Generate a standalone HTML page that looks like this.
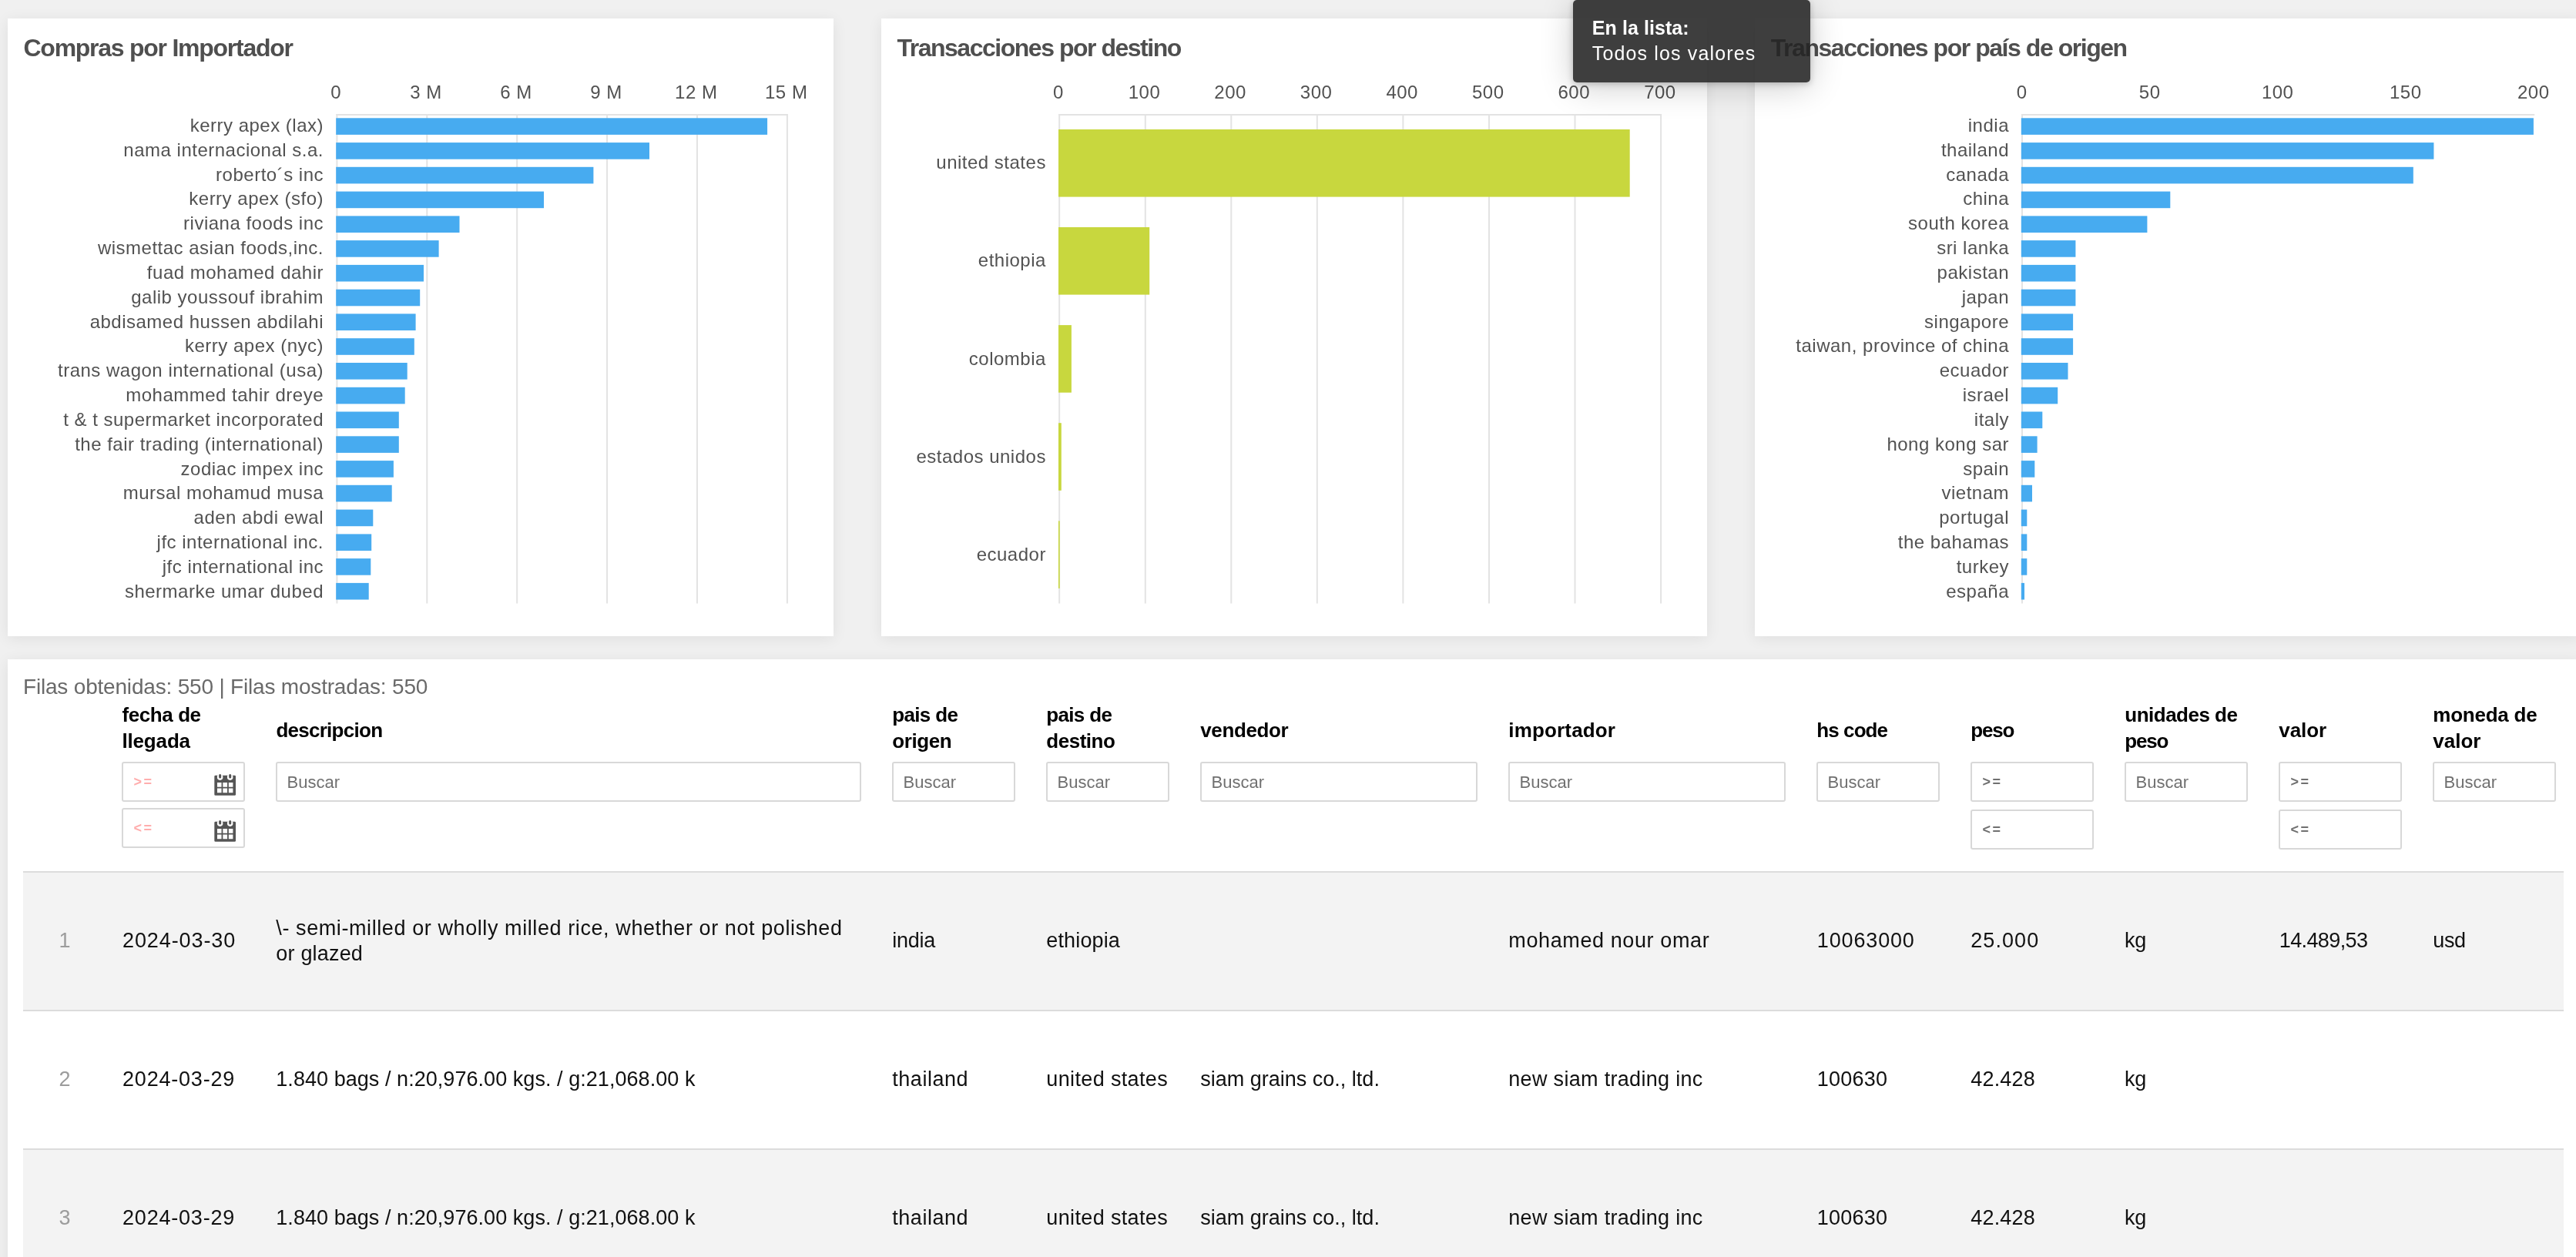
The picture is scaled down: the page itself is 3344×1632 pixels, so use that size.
<!DOCTYPE html><html lang="es"><head><meta charset="utf-8"><title>Dashboard</title><style>
html,body{margin:0;padding:0}
body{width:3344px;height:1632px;overflow:hidden;background:#f0f0f0;position:relative;font-family:'Liberation Sans', sans-serif}
#app{position:absolute;left:0;top:0;width:3344px;height:1632px;overflow:hidden;will-change:transform}
.card{position:absolute;background:#fff;box-shadow:0 3px 18px rgba(0,0,0,.075)}
.t{position:absolute;white-space:pre;display:block;margin:0;font-weight:400}
.chart{position:absolute;left:0;top:0}
.tip{position:absolute;left:2042px;top:0;width:308px;height:107px;border-radius:5px;background:rgba(35,35,35,.88);box-shadow:0 2px 8px rgba(0,0,0,.22),0 6px 44px rgba(0,0,0,.2)}
.inp{position:absolute;box-sizing:border-box;border:2px solid #d8d8d8;border-radius:3px;background:#fff}
.ic{position:absolute}
.row{position:absolute;left:20px;width:3298px;box-sizing:border-box}
.hline{position:absolute;left:20px;width:3298px;height:2px;background:#dcdcdc}
</style></head><body><main id="app">
<section class="card" style="left:10px;top:24px;width:1072px;height:802px">
<svg class="chart" width="1072" height="802" viewBox="10 24 1072 802">
<g stroke="#e3e3e3" stroke-width="2" fill="none">
<line x1="436.4" y1="149.0" x2="1022.9" y2="149.0"/>
<line x1="437.4" y1="148.0" x2="437.4" y2="783.6"/>
<line x1="554.3" y1="148.0" x2="554.3" y2="783.6"/>
<line x1="671.2" y1="148.0" x2="671.2" y2="783.6"/>
<line x1="788.1" y1="148.0" x2="788.1" y2="783.6"/>
<line x1="905.0" y1="148.0" x2="905.0" y2="783.6"/>
<line x1="1021.9" y1="148.0" x2="1021.9" y2="783.6"/>
</g>
<g fill="#47abf0">
<rect x="436.2" y="153.3" width="559.9" height="21.6"/>
<rect x="436.2" y="185.1" width="406.8" height="21.6"/>
<rect x="436.2" y="216.8" width="334.2" height="21.6"/>
<rect x="436.2" y="248.6" width="269.8" height="21.6"/>
<rect x="436.2" y="280.4" width="160.3" height="21.6"/>
<rect x="436.2" y="312.1" width="133.4" height="21.6"/>
<rect x="436.2" y="343.9" width="113.8" height="21.6"/>
<rect x="436.2" y="375.7" width="109.0" height="21.6"/>
<rect x="436.2" y="407.4" width="103.4" height="21.6"/>
<rect x="436.2" y="439.2" width="101.6" height="21.6"/>
<rect x="436.2" y="471.0" width="92.5" height="21.6"/>
<rect x="436.2" y="502.8" width="89.5" height="21.6"/>
<rect x="436.2" y="534.5" width="81.6" height="21.6"/>
<rect x="436.2" y="566.3" width="81.6" height="21.6"/>
<rect x="436.2" y="598.1" width="74.7" height="21.6"/>
<rect x="436.2" y="629.8" width="72.5" height="21.6"/>
<rect x="436.2" y="661.6" width="48.1" height="21.6"/>
<rect x="436.2" y="693.4" width="46.0" height="21.6"/>
<rect x="436.2" y="725.1" width="45.1" height="21.6"/>
<rect x="436.2" y="756.9" width="42.5" height="21.6"/>
</g>
<g font-family="'Liberation Sans', sans-serif" font-size="24" letter-spacing="0.5" fill="#525252" text-anchor="middle">
<text x="436.2" y="127.7">0</text>
<text x="553.1" y="127.7">3 M</text>
<text x="670.0" y="127.7">6 M</text>
<text x="786.9" y="127.7">9 M</text>
<text x="903.8" y="127.7">12 M</text>
<text x="1020.7" y="127.7">15 M</text>
</g>
<g font-family="'Liberation Sans', sans-serif" font-size="24" letter-spacing="0.5" fill="#525252" text-anchor="end">
<text x="420.0" y="170.9">kerry apex (lax)</text>
<text x="420.0" y="202.7">nama internacional s.a.</text>
<text x="420.0" y="234.6">roberto´s inc</text>
<text x="420.0" y="266.4">kerry apex (sfo)</text>
<text x="420.0" y="298.2">riviana foods inc</text>
<text x="420.0" y="330.0">wismettac asian foods,inc.</text>
<text x="420.0" y="361.9">fuad mohamed dahir</text>
<text x="420.0" y="393.7">galib youssouf ibrahim</text>
<text x="420.0" y="425.5">abdisamed hussen abdilahi</text>
<text x="420.0" y="457.4">kerry apex (nyc)</text>
<text x="420.0" y="489.2">trans wagon international (usa)</text>
<text x="420.0" y="521.0">mohammed tahir dreye</text>
<text x="420.0" y="552.9">t &amp; t supermarket incorporated</text>
<text x="420.0" y="584.7">the fair trading (international)</text>
<text x="420.0" y="616.5">zodiac impex inc</text>
<text x="420.0" y="648.4">mursal mohamud musa</text>
<text x="420.0" y="680.2">aden abdi ewal</text>
<text x="420.0" y="712.0">jfc international inc.</text>
<text x="420.0" y="743.8">jfc international inc</text>
<text x="420.0" y="775.7">shermarke umar dubed</text>
</g></svg>
<h3 class="t" style="left:20.5px;top:22.2px;font-size:32px;line-height:32px;color:#4f4f4f;font-weight:700;letter-spacing:-1.26px;">Compras por Importador</h3>
</section>
<section class="card" style="left:1144px;top:24px;width:1072px;height:802px">
<svg class="chart" width="1072" height="802" viewBox="1144 24 1072 802">
<g stroke="#e3e3e3" stroke-width="2" fill="none">
<line x1="1374.2" y1="149.0" x2="2157.05" y2="149.0"/>
<line x1="1375.2" y1="148.0" x2="1375.2" y2="783.6"/>
<line x1="1486.8" y1="148.0" x2="1486.8" y2="783.6"/>
<line x1="1598.3" y1="148.0" x2="1598.3" y2="783.6"/>
<line x1="1709.8" y1="148.0" x2="1709.8" y2="783.6"/>
<line x1="1821.4" y1="148.0" x2="1821.4" y2="783.6"/>
<line x1="1933.0" y1="148.0" x2="1933.0" y2="783.6"/>
<line x1="2044.5" y1="148.0" x2="2044.5" y2="783.6"/>
<line x1="2156.1" y1="148.0" x2="2156.1" y2="783.6"/>
</g>
<g fill="#c8d73e">
<rect x="1374.0" y="168.0" width="741.7" height="87.6"/>
<rect x="1374.0" y="295.0" width="118.2" height="87.6"/>
<rect x="1374.0" y="422.1" width="16.9" height="87.6"/>
<rect x="1374.0" y="549.2" width="3.8" height="87.6"/>
<rect x="1374.0" y="676.3" width="1.6" height="87.6"/>
</g>
<g font-family="'Liberation Sans', sans-serif" font-size="24" letter-spacing="0.5" fill="#525252" text-anchor="middle">
<text x="1374.0" y="127.7">0</text>
<text x="1485.5" y="127.7">100</text>
<text x="1597.1" y="127.7">200</text>
<text x="1708.6" y="127.7">300</text>
<text x="1820.2" y="127.7">400</text>
<text x="1931.8" y="127.7">500</text>
<text x="2043.3" y="127.7">600</text>
<text x="2154.9" y="127.7">700</text>
</g>
<g font-family="'Liberation Sans', sans-serif" font-size="24" letter-spacing="0.5" fill="#525252" text-anchor="end">
<text x="1357.9" y="219.3">united states</text>
<text x="1357.9" y="346.4">ethiopia</text>
<text x="1357.9" y="473.5">colombia</text>
<text x="1357.9" y="600.6">estados unidos</text>
<text x="1357.9" y="727.7">ecuador</text>
</g></svg>
<h3 class="t" style="left:20.4px;top:22.2px;font-size:32px;line-height:32px;color:#4f4f4f;font-weight:700;letter-spacing:-1.48px;">Transacciones por destino</h3>
</section>
<section class="card" style="left:2278px;top:24px;width:1072px;height:802px">
<svg class="chart" width="1072" height="802" viewBox="2278 24 1072 802">
<g stroke="#e3e3e3" stroke-width="2" fill="none">
<line x1="2624.0" y1="149.0" x2="3290.2" y2="149.0"/>
<line x1="2625.0" y1="148.0" x2="2625.0" y2="783.6"/>
</g>
<g fill="#47abf0">
<rect x="2623.8" y="153.3" width="665.1" height="21.6"/>
<rect x="2623.8" y="185.1" width="535.6" height="21.6"/>
<rect x="2623.8" y="216.8" width="509.0" height="21.6"/>
<rect x="2623.8" y="248.6" width="193.5" height="21.6"/>
<rect x="2623.8" y="280.4" width="163.6" height="21.6"/>
<rect x="2623.8" y="312.1" width="70.6" height="21.6"/>
<rect x="2623.8" y="343.9" width="70.6" height="21.6"/>
<rect x="2623.8" y="375.7" width="70.6" height="21.6"/>
<rect x="2623.8" y="407.4" width="67.3" height="21.6"/>
<rect x="2623.8" y="439.2" width="67.3" height="21.6"/>
<rect x="2623.8" y="471.0" width="60.7" height="21.6"/>
<rect x="2623.8" y="502.8" width="47.4" height="21.6"/>
<rect x="2623.8" y="534.5" width="27.5" height="21.6"/>
<rect x="2623.8" y="566.3" width="20.8" height="21.6"/>
<rect x="2623.8" y="598.1" width="17.5" height="21.6"/>
<rect x="2623.8" y="629.8" width="14.2" height="21.6"/>
<rect x="2623.8" y="661.6" width="7.5" height="21.6"/>
<rect x="2623.8" y="693.4" width="7.5" height="21.6"/>
<rect x="2623.8" y="725.1" width="7.5" height="21.6"/>
<rect x="2623.8" y="756.9" width="4.2" height="21.6"/>
</g>
<g font-family="'Liberation Sans', sans-serif" font-size="24" letter-spacing="0.5" fill="#525252" text-anchor="middle">
<text x="2624.6" y="127.7">0</text>
<text x="2790.7" y="127.7">50</text>
<text x="2956.7" y="127.7">100</text>
<text x="3122.8" y="127.7">150</text>
<text x="3288.8" y="127.7">200</text>
</g>
<g font-family="'Liberation Sans', sans-serif" font-size="24" letter-spacing="0.5" fill="#525252" text-anchor="end">
<text x="2608.0" y="170.9">india</text>
<text x="2608.0" y="202.7">thailand</text>
<text x="2608.0" y="234.6">canada</text>
<text x="2608.0" y="266.4">china</text>
<text x="2608.0" y="298.2">south korea</text>
<text x="2608.0" y="330.0">sri lanka</text>
<text x="2608.0" y="361.9">pakistan</text>
<text x="2608.0" y="393.7">japan</text>
<text x="2608.0" y="425.5">singapore</text>
<text x="2608.0" y="457.4">taiwan, province of china</text>
<text x="2608.0" y="489.2">ecuador</text>
<text x="2608.0" y="521.0">israel</text>
<text x="2608.0" y="552.9">italy</text>
<text x="2608.0" y="584.7">hong kong sar</text>
<text x="2608.0" y="616.5">spain</text>
<text x="2608.0" y="648.4">vietnam</text>
<text x="2608.0" y="680.2">portugal</text>
<text x="2608.0" y="712.0">the bahamas</text>
<text x="2608.0" y="743.8">turkey</text>
<text x="2608.0" y="775.7">españa</text>
</g></svg>
<h3 class="t" style="left:20.8px;top:22.2px;font-size:32px;line-height:32px;color:#4f4f4f;font-weight:700;letter-spacing:-1.46px;">Transacciones por país de origen</h3>
</section>
<section class="card" style="left:10px;top:856px;width:3340px;height:800px">
<div class="hline" style="top:275px"></div>
<div class="row" style="top:277px;height:178px;background:#f3f3f3"></div>
<div class="hline" style="top:455px"></div>
<div class="hline" style="top:635px"></div>
<div class="row" style="top:637px;height:178px;background:#f3f3f3"></div>
<div class="inp" style="left:148.4px;top:133.4px;width:159.6px;height:51.2px"></div>
<svg class="ic" style="left:267.8px;top:148.0px" width="28.6" height="29.62" viewBox="0 0 28 29"><path fill="#555" fill-rule="evenodd" d="M1.7 2.75h24.4a1.4 1.4 0 0 1 1.4 1.4v22.7a1.4 1.4 0 0 1-1.4 1.4h-24.4a1.4 1.4 0 0 1-1.4-1.4v-22.7a1.4 1.4 0 0 1 1.4-1.4zM3.9 11.86h5.45v5.43h-5.45zM3.9 19.22h5.45v5.43h-5.45zM11.1 11.86h5.6v5.43h-5.6zM11.1 19.22h5.6v5.43h-5.6zM18.45 11.86h5.45v5.43h-5.45zM18.45 19.22h5.45v5.43h-5.45z"/><circle cx="7.47" cy="5" r="3.7" fill="#fff"/><circle cx="20.26" cy="5" r="3.7" fill="#fff"/><rect x="5.97" y="1" width="3" height="5.43" rx="1.5" fill="#555"/><rect x="18.76" y="1" width="3" height="5.43" rx="1.5" fill="#555"/></svg>
<div class="inp" style="left:148.4px;top:193.3px;width:159.6px;height:51.3px"></div>
<svg class="ic" style="left:267.8px;top:207.9px" width="28.6" height="29.62" viewBox="0 0 28 29"><path fill="#555" fill-rule="evenodd" d="M1.7 2.75h24.4a1.4 1.4 0 0 1 1.4 1.4v22.7a1.4 1.4 0 0 1-1.4 1.4h-24.4a1.4 1.4 0 0 1-1.4-1.4v-22.7a1.4 1.4 0 0 1 1.4-1.4zM3.9 11.86h5.45v5.43h-5.45zM3.9 19.22h5.45v5.43h-5.45zM11.1 11.86h5.6v5.43h-5.6zM11.1 19.22h5.6v5.43h-5.6zM18.45 11.86h5.45v5.43h-5.45zM18.45 19.22h5.45v5.43h-5.45z"/><circle cx="7.47" cy="5" r="3.7" fill="#fff"/><circle cx="20.26" cy="5" r="3.7" fill="#fff"/><rect x="5.97" y="1" width="3" height="5.43" rx="1.5" fill="#555"/><rect x="18.76" y="1" width="3" height="5.43" rx="1.5" fill="#555"/></svg>
<div class="inp" style="left:348.4px;top:133.3px;width:759.4px;height:51.4px"></div>
<div class="inp" style="left:1148.3px;top:133.3px;width:159.6px;height:51.4px"></div>
<div class="inp" style="left:1348.3px;top:133.3px;width:159.6px;height:51.4px"></div>
<div class="inp" style="left:1548.3px;top:133.3px;width:359.6px;height:51.4px"></div>
<div class="inp" style="left:1948.3px;top:133.3px;width:359.6px;height:51.4px"></div>
<div class="inp" style="left:2348.3px;top:133.3px;width:159.6px;height:51.4px"></div>
<div class="inp" style="left:2748.3px;top:133.3px;width:159.6px;height:51.4px"></div>
<div class="inp" style="left:3148.3px;top:133.3px;width:159.6px;height:51.4px"></div>
<div class="inp" style="left:2548.3px;top:133.3px;width:159.6px;height:51.4px"></div>
<div class="inp" style="left:2548.3px;top:195.4px;width:159.6px;height:51.3px"></div>
<div class="inp" style="left:2948.3px;top:133.3px;width:159.6px;height:51.4px"></div>
<div class="inp" style="left:2948.3px;top:195.4px;width:159.6px;height:51.3px"></div>
<span class="t" style="left:20.0px;top:22.3px;font-size:28px;line-height:28px;color:#6a6a6a;letter-spacing:-0.19px;">Filas obtenidas: 550 | Filas mostradas: 550</span>
<strong class="t" style="left:148.4px;top:58.7px;font-size:26px;line-height:26px;color:#000;font-weight:700;letter-spacing:-0.40px;">fecha de</strong>
<strong class="t" style="left:148.4px;top:92.8px;font-size:26px;line-height:26px;color:#000;font-weight:700;letter-spacing:-0.15px;">llegada</strong>
<strong class="t" style="left:348.4px;top:78.8px;font-size:26px;line-height:26px;color:#000;font-weight:700;letter-spacing:-0.73px;">descripcion</strong>
<strong class="t" style="left:1148.3px;top:58.7px;font-size:26px;line-height:26px;color:#000;font-weight:700;letter-spacing:-0.67px;">pais de</strong>
<strong class="t" style="left:1148.3px;top:92.8px;font-size:26px;line-height:26px;color:#000;font-weight:700;letter-spacing:-0.41px;">origen</strong>
<strong class="t" style="left:1348.3px;top:58.7px;font-size:26px;line-height:26px;color:#000;font-weight:700;letter-spacing:-0.67px;">pais de</strong>
<strong class="t" style="left:1348.3px;top:92.8px;font-size:26px;line-height:26px;color:#000;font-weight:700;letter-spacing:-0.49px;">destino</strong>
<strong class="t" style="left:1548.3px;top:78.8px;font-size:26px;line-height:26px;color:#000;font-weight:700;letter-spacing:-0.39px;">vendedor</strong>
<strong class="t" style="left:1948.3px;top:78.8px;font-size:26px;line-height:26px;color:#000;font-weight:700;letter-spacing:0.16px;">importador</strong>
<strong class="t" style="left:2348.3px;top:78.8px;font-size:26px;line-height:26px;color:#000;font-weight:700;letter-spacing:-0.92px;">hs code</strong>
<strong class="t" style="left:2548.3px;top:78.8px;font-size:26px;line-height:26px;color:#000;font-weight:700;letter-spacing:-1.20px;">peso</strong>
<strong class="t" style="left:2748.3px;top:58.7px;font-size:26px;line-height:26px;color:#000;font-weight:700;letter-spacing:-0.51px;">unidades de</strong>
<strong class="t" style="left:2748.3px;top:92.8px;font-size:26px;line-height:26px;color:#000;font-weight:700;letter-spacing:-1.20px;">peso</strong>
<strong class="t" style="left:2948.3px;top:78.8px;font-size:26px;line-height:26px;color:#000;font-weight:700;letter-spacing:-0.09px;">valor</strong>
<strong class="t" style="left:3148.3px;top:58.7px;font-size:26px;line-height:26px;color:#000;font-weight:700;letter-spacing:-0.24px;">moneda de</strong>
<strong class="t" style="left:3148.3px;top:92.8px;font-size:26px;line-height:26px;color:#000;font-weight:700;letter-spacing:0.01px;">valor</strong>
<span class="t" style="left:74.0px;top:352.3px;font-size:27px;line-height:27px;color:#9c9c9c;width:60px;margin-left:-30px;text-align:center;">1</span>
<span class="t" style="left:149.0px;top:352.3px;font-size:27px;line-height:27px;color:#111;letter-spacing:0.91px;">2024-03-30</span>
<span class="t" style="left:1148.3px;top:352.3px;font-size:27px;line-height:27px;color:#111;letter-spacing:-0.26px;">india</span>
<span class="t" style="left:1348.3px;top:352.3px;font-size:27px;line-height:27px;color:#111;letter-spacing:0.14px;">ethiopia</span>
<span class="t" style="left:1948.3px;top:352.3px;font-size:27px;line-height:27px;color:#111;letter-spacing:0.61px;">mohamed nour omar</span>
<span class="t" style="left:2348.8px;top:352.3px;font-size:27px;line-height:27px;color:#111;letter-spacing:0.85px;">10063000</span>
<span class="t" style="left:2548.3px;top:352.3px;font-size:27px;line-height:27px;color:#111;letter-spacing:1.06px;">25.000</span>
<span class="t" style="left:2747.9px;top:352.3px;font-size:27px;line-height:27px;color:#111;letter-spacing:-0.23px;">kg</span>
<span class="t" style="left:2948.8px;top:352.3px;font-size:27px;line-height:27px;color:#111;letter-spacing:-0.62px;">14.489,53</span>
<span class="t" style="left:3148.3px;top:352.3px;font-size:27px;line-height:27px;color:#111;letter-spacing:-0.42px;">usd</span>
<span class="t" style="left:74.0px;top:532.3px;font-size:27px;line-height:27px;color:#9c9c9c;width:60px;margin-left:-30px;text-align:center;">2</span>
<span class="t" style="left:149.0px;top:532.3px;font-size:27px;line-height:27px;color:#111;letter-spacing:0.80px;">2024-03-29</span>
<span class="t" style="left:348.3px;top:532.3px;font-size:27px;line-height:27px;color:#111;letter-spacing:0.05px;">1.840 bags / n:20,976.00 kgs. / g:21,068.00 k</span>
<span class="t" style="left:1148.3px;top:532.3px;font-size:27px;line-height:27px;color:#111;letter-spacing:0.52px;">thailand</span>
<span class="t" style="left:1348.3px;top:532.3px;font-size:27px;line-height:27px;color:#111;letter-spacing:0.36px;">united states</span>
<span class="t" style="left:1548.3px;top:532.3px;font-size:27px;line-height:27px;color:#111;">siam grains co., ltd.</span>
<span class="t" style="left:1948.3px;top:532.3px;font-size:27px;line-height:27px;color:#111;letter-spacing:0.31px;">new siam trading inc</span>
<span class="t" style="left:2348.8px;top:532.3px;font-size:27px;line-height:27px;color:#111;letter-spacing:0.22px;">100630</span>
<span class="t" style="left:2548.3px;top:532.3px;font-size:27px;line-height:27px;color:#111;letter-spacing:0.18px;">42.428</span>
<span class="t" style="left:2747.9px;top:532.3px;font-size:27px;line-height:27px;color:#111;letter-spacing:-0.23px;">kg</span>
<span class="t" style="left:74.0px;top:712.3px;font-size:27px;line-height:27px;color:#9c9c9c;width:60px;margin-left:-30px;text-align:center;">3</span>
<span class="t" style="left:149.0px;top:712.3px;font-size:27px;line-height:27px;color:#111;letter-spacing:0.80px;">2024-03-29</span>
<span class="t" style="left:348.3px;top:712.3px;font-size:27px;line-height:27px;color:#111;letter-spacing:0.05px;">1.840 bags / n:20,976.00 kgs. / g:21,068.00 k</span>
<span class="t" style="left:1148.3px;top:712.3px;font-size:27px;line-height:27px;color:#111;letter-spacing:0.52px;">thailand</span>
<span class="t" style="left:1348.3px;top:712.3px;font-size:27px;line-height:27px;color:#111;letter-spacing:0.36px;">united states</span>
<span class="t" style="left:1548.3px;top:712.3px;font-size:27px;line-height:27px;color:#111;">siam grains co., ltd.</span>
<span class="t" style="left:1948.3px;top:712.3px;font-size:27px;line-height:27px;color:#111;letter-spacing:0.31px;">new siam trading inc</span>
<span class="t" style="left:2348.8px;top:712.3px;font-size:27px;line-height:27px;color:#111;letter-spacing:0.22px;">100630</span>
<span class="t" style="left:2548.3px;top:712.3px;font-size:27px;line-height:27px;color:#111;letter-spacing:0.18px;">42.428</span>
<span class="t" style="left:2747.9px;top:712.3px;font-size:27px;line-height:27px;color:#111;letter-spacing:-0.23px;">kg</span>
<span class="t" style="left:348.3px;top:335.8px;font-size:27px;line-height:27px;color:#111;letter-spacing:0.59px;">\- semi-milled or wholly milled rice, whether or not polished</span>
<span class="t" style="left:348.3px;top:369.2px;font-size:27px;line-height:27px;color:#111;letter-spacing:0.19px;">or glazed</span>
<span class="t" style="left:163.6px;top:149.8px;font-size:18px;line-height:18px;color:#ffadad;font-weight:700;letter-spacing:2.37px;">&gt;=</span>
<span class="t" style="left:163.6px;top:209.7px;font-size:18px;line-height:18px;color:#ffadad;font-weight:700;letter-spacing:2.37px;">&lt;=</span>
<span class="t" style="left:362.6px;top:148.9px;font-size:22px;line-height:22px;color:#707070;letter-spacing:0.02px;">Buscar</span>
<span class="t" style="left:1162.5px;top:148.9px;font-size:22px;line-height:22px;color:#707070;letter-spacing:0.02px;">Buscar</span>
<span class="t" style="left:1362.5px;top:148.9px;font-size:22px;line-height:22px;color:#707070;letter-spacing:0.02px;">Buscar</span>
<span class="t" style="left:1562.5px;top:148.9px;font-size:22px;line-height:22px;color:#707070;letter-spacing:0.02px;">Buscar</span>
<span class="t" style="left:1962.5px;top:148.9px;font-size:22px;line-height:22px;color:#707070;letter-spacing:0.02px;">Buscar</span>
<span class="t" style="left:2362.5px;top:148.9px;font-size:22px;line-height:22px;color:#707070;letter-spacing:0.02px;">Buscar</span>
<span class="t" style="left:2762.5px;top:148.9px;font-size:22px;line-height:22px;color:#707070;letter-spacing:0.02px;">Buscar</span>
<span class="t" style="left:3162.5px;top:148.9px;font-size:22px;line-height:22px;color:#707070;letter-spacing:0.02px;">Buscar</span>
<span class="t" style="left:2563.5px;top:149.7px;font-size:18px;line-height:18px;color:#707070;font-weight:700;letter-spacing:2.37px;">&gt;=</span>
<span class="t" style="left:2563.5px;top:211.8px;font-size:18px;line-height:18px;color:#707070;font-weight:700;letter-spacing:2.37px;">&lt;=</span>
<span class="t" style="left:2963.5px;top:149.7px;font-size:18px;line-height:18px;color:#707070;font-weight:700;letter-spacing:2.37px;">&gt;=</span>
<span class="t" style="left:2963.5px;top:211.8px;font-size:18px;line-height:18px;color:#707070;font-weight:700;letter-spacing:2.37px;">&lt;=</span>
</section>
<div class="tip"><span class="t" style="left:24.8px;top:23.7px;font-size:25px;line-height:25px;color:#fff;font-weight:700;letter-spacing:0.07px;">En la lista:</span><span class="t" style="left:24.8px;top:56.6px;font-size:25px;line-height:25px;color:#fff;letter-spacing:1.14px;">Todos los valores</span></div>
</main></body></html>
